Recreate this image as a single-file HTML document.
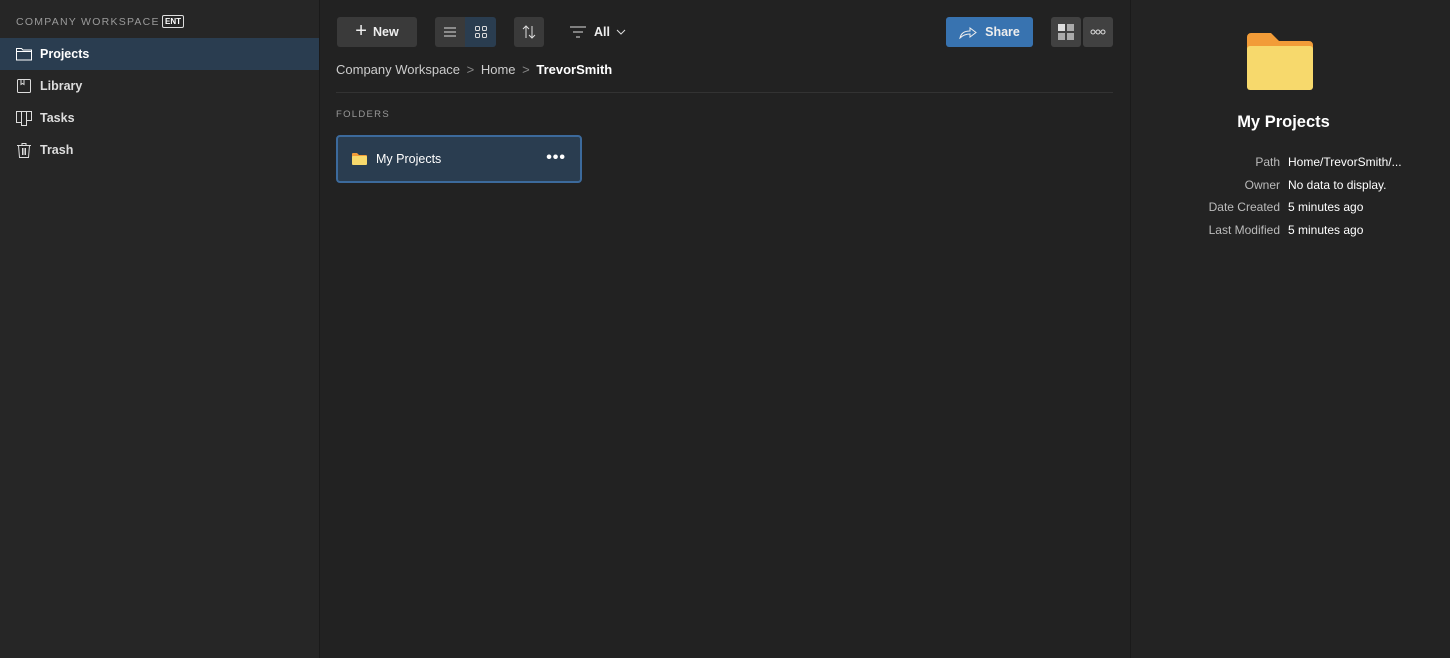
<!DOCTYPE html>
<html><head><meta charset="utf-8"><style>
*{box-sizing:border-box;margin:0;padding:0}
body{width:1450px;height:658px;background:#222;font-family:"Liberation Sans",sans-serif;color:#ddd;position:relative;overflow:hidden;font-size:12px}
.side{position:absolute;left:0;top:0;width:320px;height:658px;background:#262626;border-right:1px solid #1a1a1a}
.ws{position:absolute;left:16px;top:16px;font-size:10.5px;letter-spacing:1.25px;color:#9a9a9a}
.ent{position:absolute;left:162px;top:15px;border:1px solid #ddd;border-radius:2px;font-size:8px;color:#fff;padding:1px 2px;font-weight:bold;line-height:9px}
.nav{position:absolute;left:0;width:319px;height:32px;display:flex;align-items:center;padding-left:16px;font-weight:bold;font-size:12.5px;color:#ddd}
.nav svg{margin-right:8px}
.nav.act{background:#2a3d50;color:#fff}
.main{position:absolute;left:320px;top:0;width:810px;height:658px;background:#222}
.btn{position:absolute;top:17px;height:30px;background:#3a3a3a;border-radius:3px;display:flex;align-items:center;justify-content:center;color:#eee;font-weight:bold;font-size:12.5px}
.right{position:absolute;left:1130px;top:0;width:320px;height:658px;background:#232323;border-left:1px solid #1a1a1a}
.kv{position:absolute;font-size:12px}
</style></head><body>
<div class="side">
<div class="ws">COMPANY WORKSPACE</div><div class="ent">ENT</div>
<div class="nav act" style="top:38px"><svg width="16" height="14" viewBox="0 0 16 14"><path d="M.5 1.5h5l1.5 1.5h8.5v10H.5z M.5 4.5h15" fill="none" stroke="#fff"/></svg>Projects</div>
<div class="nav" style="top:70px"><svg width="16" height="16" viewBox="0 0 16 16"><rect x="1.5" y="1.5" width="13" height="13" rx="1" fill="none" stroke="#ddd"/><path d="M5 1.5v5l1.5-1 1.5 1v-5" fill="none" stroke="#ddd"/></svg>Library</div>
<div class="nav" style="top:102px"><svg width="16" height="16" viewBox="0 0 16 16"><path d="M.5 1.5h15v9h-5v5h-5v-3h-5z M5.5 1.5v11 M10.5 1.5v9" fill="none" stroke="#ddd"/></svg>Tasks</div>
<div class="nav" style="top:134px"><svg width="16" height="16" viewBox="0 0 16 16"><path d="M1 3.5h14 M6 3.5v-2h4v2 M2.5 3.5l1 12h9l1-12 M6.5 6v7 M8 6v7 M9.5 6v7" fill="none" stroke="#ddd"/></svg>Trash</div>
</div>
<div class="main">
<div class="btn" style="left:17px;width:80px"><span style="font-size:20px;font-weight:normal;margin-right:6px;margin-top:-2px">+</span>New</div>
<div class="btn" style="left:115px;width:30px;border-radius:3px 0 0 3px"><svg width="14" height="12"><path d="M1 2h12M1 6h12M1 10h12" stroke="#ddd"/></svg></div>
<div class="btn" style="left:145px;width:31px;background:#2a3d50;border-radius:0 3px 3px 0"><svg width="12" height="12"><rect x=".5" y=".5" width="4" height="4" rx="1" fill="none" stroke="#ddd"/><rect x="7.5" y=".5" width="4" height="4" rx="1" fill="none" stroke="#ddd"/><rect x=".5" y="7.5" width="4" height="4" rx="1" fill="none" stroke="#ddd"/><rect x="7.5" y="7.5" width="4" height="4" rx="1" fill="none" stroke="#ddd"/></svg></div>
<div class="btn" style="left:194px;width:30px"><svg width="16" height="16"><path d="M5 14V2M2 5l3-3 3 3M11 2v12M8 11l3 3 3-3" fill="none" stroke="#ddd"/></svg></div>
<div style="position:absolute;left:250px;top:25px;display:flex;align-items:center;font-weight:bold;font-size:12.5px;color:#eee"><svg width="16" height="14" style="margin-right:8px"><path d="M0 2h16M3 7h10M6 12h4" stroke="#ddd"/></svg>All<svg width="10" height="8" style="margin-left:6px"><path d="M1 2l4 4 4-4" fill="none" stroke="#ddd"/></svg></div>
<div class="btn" style="left:626px;width:87px;background:#3873b0"><svg width="18" height="14" style="margin-right:8px"><path d="M1 13c1-5 5-7 10-7V3l6 4.5-6 4.5V9c-4 0-7 1-10 4z" fill="none" stroke="#eee"/></svg>Share</div>
<div class="btn" style="left:731px;width:30px;background:#414141"><svg width="16" height="16"><rect x="0" y="0" width="7" height="7" fill="#ddd"/><rect x="9" y="0" width="7" height="7" fill="#aaa"/><rect x="0" y="9" width="7" height="7" fill="#aaa"/><rect x="9" y="9" width="7" height="7" fill="#aaa"/></svg></div>
<div class="btn" style="left:763px;width:30px;background:#414141"><svg width="16" height="6"><circle cx="3" cy="3" r="2" fill="none" stroke="#ddd"/><circle cx="8" cy="3" r="2" fill="none" stroke="#ddd"/><circle cx="13" cy="3" r="2" fill="none" stroke="#ddd"/></svg></div>
<div style="position:absolute;left:16px;top:62px;font-size:13px;color:#ccc">Company Workspace <span style="color:#888;margin:0 3px">&gt;</span> Home <span style="color:#888;margin:0 3px">&gt;</span> <b style="color:#fff">TrevorSmith</b></div>
<div style="position:absolute;left:16px;top:92px;width:777px;height:1px;background:#333"></div>
<div style="position:absolute;left:16px;top:109px;font-size:9.5px;letter-spacing:1.3px;color:#999">FOLDERS</div>
<div style="position:absolute;left:16px;top:135px;width:246px;height:48px;background:#2a3d50;border:2px solid #3c6a9c;border-radius:4px;display:flex;align-items:center;padding-left:14px;color:#fff;font-size:12.5px">
<svg width="15" height="12" style="margin-right:9px"><path d="M0 1a1 1 0 011-1h4l2 2h7a1 1 0 011 1v1H0z" fill="#f29c38"/><rect x="0" y="3" width="15" height="9" rx="1" fill="#f7d96c"/></svg>My Projects
<span style="position:absolute;right:14px;top:12px;font-size:16px;letter-spacing:1px;font-weight:bold">•••</span></div>
</div>
<div class="right">
<svg width="66" height="58" style="position:absolute;left:116px;top:33px"><path d="M0 4a4 4 0 014-4h20l8 8h30a4 4 0 014 4v8H0z" fill="#f29c38"/><rect x="0" y="13" width="66" height="44" rx="3" fill="#f7d96c"/></svg>
<div style="position:absolute;left:0;width:305px;top:113px;text-align:center;font-size:16.5px;font-weight:bold;color:#fff">My Projects</div>
<div class="kv" style="right:170px;top:151px;color:#bbb;text-align:right;line-height:22.5px">Path<br>Owner<br>Date Created<br>Last Modified</div>
<div class="kv" style="left:157px;top:151px;color:#fff;line-height:22.5px">Home/TrevorSmith/...<br>No data to display.<br>5 minutes ago<br>5 minutes ago</div>
</div>
</body></html>
